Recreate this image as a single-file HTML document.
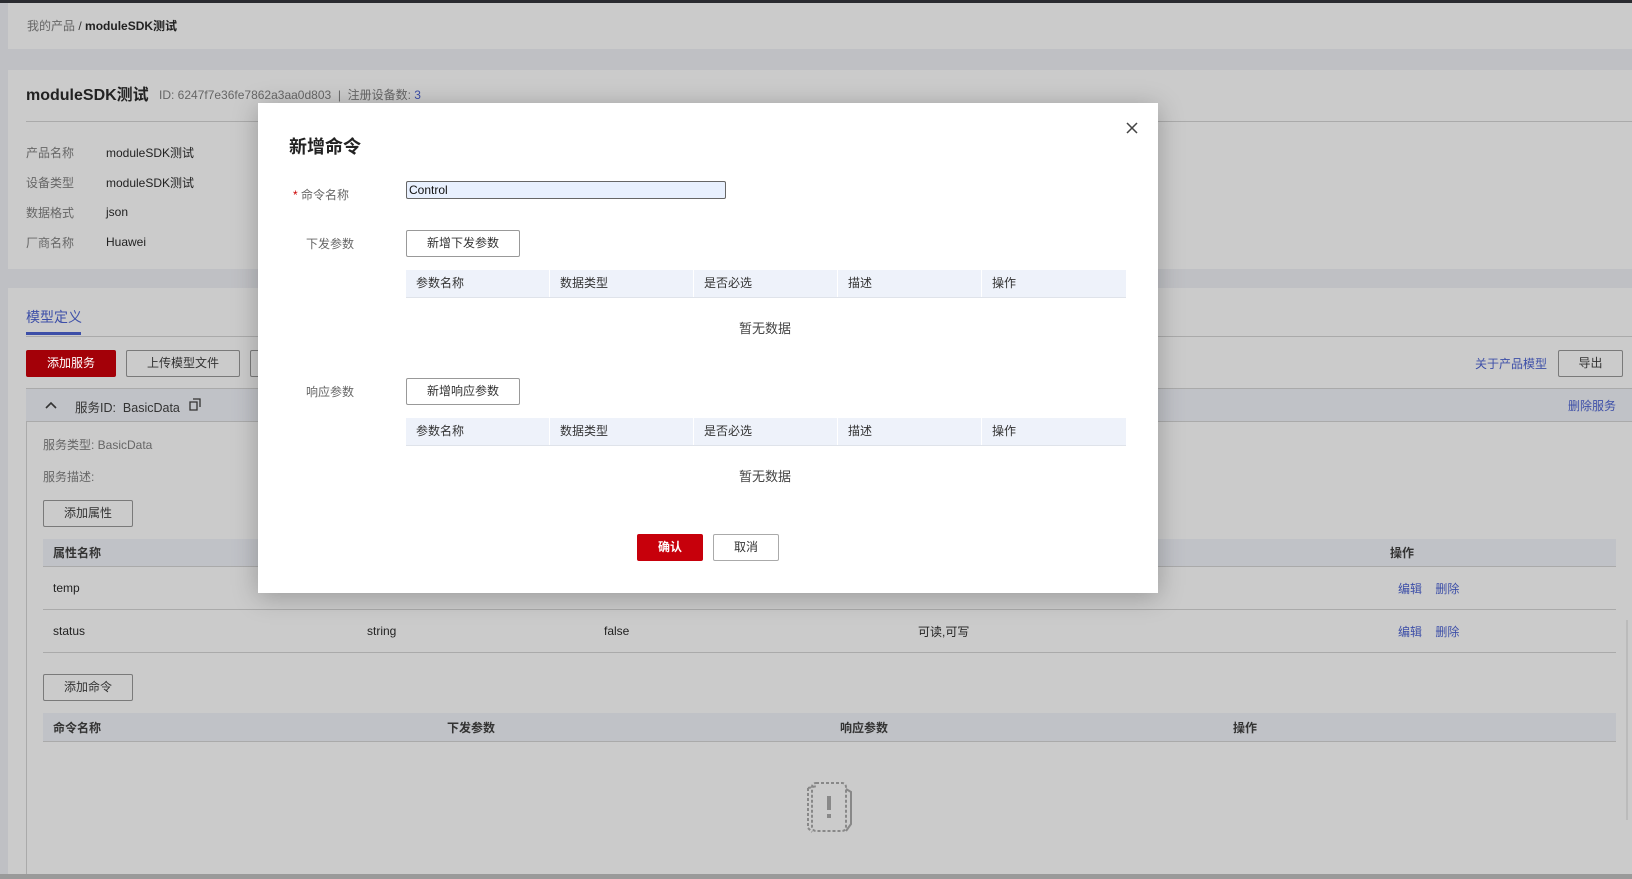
<!DOCTYPE html>
<html><head><meta charset="utf-8"><style>
*{margin:0;padding:0;box-sizing:border-box}
body{width:1632px;height:879px;overflow:hidden;background:#bfc0c4;font-family:"Liberation Sans","Noto Sans CJK SC",sans-serif;font-size:12px;color:#222;position:relative}
.a{position:absolute;white-space:nowrap}
.card{position:absolute;background:#cbcbcb}
.btn{position:absolute;border:1px solid #7a7a7a;border-radius:2px;text-align:center;color:#333;background:transparent}
.lbl{color:#666}
.blue{color:#3d4fa8}
.th{position:absolute;background:#c0c2c7;border-bottom:1px solid #aaa}
.mth{position:absolute;background:#eef2fa;border-bottom:1px solid #dfe3ea;height:28px}
.mth span{position:absolute;top:4px;color:#333}
.mth i{position:absolute;top:0;width:1px;height:27px;background:#fff}
</style></head><body>
<div class="a" style="left:0;top:0;width:1632px;height:3px;background:#2a2b30"></div>
<div class="card" style="left:8px;top:3px;width:1624px;height:46px"></div>
<div class="a lbl" style="left:27px;top:17px">我的产品 <span style="color:#333">/</span> <b style="color:#222">moduleSDK测试</b></div>
<div class="card" style="left:8px;top:70px;width:1624px;height:199px"></div>
<div class="a" style="left:26px;top:81px;font-size:16px;font-weight:bold">moduleSDK测试</div>
<div class="a lbl" style="left:159px;top:86px">ID: 6247f7e36fe7862a3aa0d803 &nbsp;| &nbsp;注册设备数: <span class="blue">3</span></div>
<div class="a" style="left:26px;top:121px;width:1606px;height:1px;background:#aaa"></div>
<div class="a lbl" style="left:26px;top:144px">产品名称</div><div class="a" style="left:106px;top:144px">moduleSDK测试</div>
<div class="a lbl" style="left:26px;top:174px">设备类型</div><div class="a" style="left:106px;top:174px">moduleSDK测试</div>
<div class="a lbl" style="left:26px;top:204px">数据格式</div><div class="a" style="left:106px;top:205px">json</div>
<div class="a lbl" style="left:26px;top:234px">厂商名称</div><div class="a" style="left:106px;top:235px">Huawei</div>
<div class="card" style="left:8px;top:288px;width:1624px;height:586px"></div>
<div class="a blue" style="left:26px;top:307px;font-size:14px">模型定义</div>
<div class="a" style="left:26px;top:332px;width:55px;height:3px;background:#3d4fa8"></div>
<div class="a" style="left:26px;top:336px;width:1606px;height:1px;background:#aaa"></div>
<div class="btn" style="left:26px;top:350px;width:90px;height:27px;line-height:25px;background:#a30008;border-color:#a30008;color:#fff">添加服务</div>
<div class="btn" style="left:126px;top:350px;width:114px;height:27px;line-height:25px">上传模型文件</div>
<div class="btn" style="left:250px;top:350px;width:30px;height:27px"></div>
<div class="a blue" style="left:1475px;top:355px">关于产品模型</div>
<div class="btn" style="left:1558px;top:350px;width:65px;height:27px;line-height:25px">导出</div>
<div class="a" style="left:26px;top:388px;width:1606px;height:34px;background:#c0c2c7;border-top:1px solid #aaa;border-bottom:1px solid #aaa"></div>
<div class="a" style="left:26px;top:422px;width:1px;height:452px;background:#aaa"></div>
<svg class="a" style="left:44px;top:400px" width="14" height="10" viewBox="0 0 14 10"><path d="M2 8l5-5 5 5" fill="none" stroke="#333" stroke-width="1.6"/></svg>
<div class="a" style="left:75px;top:397px;color:#333;font-size:12.5px">服务ID: &nbsp;BasicData</div>
<svg class="a" style="left:189px;top:398px" width="12" height="13" viewBox="0 0 12 13"><path d="M4 1h7v8M1 4h7v8H1z" fill="none" stroke="#333" stroke-width="1.3"/></svg>
<div class="a blue" style="left:1568px;top:397px">删除服务</div>
<div class="a lbl" style="left:43px;top:436px">服务类型: BasicData</div>
<div class="a lbl" style="left:43px;top:468px">服务描述:</div>
<div class="btn" style="left:43px;top:500px;width:90px;height:27px;line-height:25px">添加属性</div>
<div class="th" style="left:43px;top:539px;width:1573px;height:28px"></div>
<div class="a" style="left:53px;top:544px;font-weight:bold;color:#333">属性名称</div>
<div class="a" style="left:1390px;top:544px;font-weight:bold;color:#333">操作</div>
<div class="a" style="left:53px;top:581px">temp</div>
<div class="a" style="left:43px;top:609px;width:1573px;height:1px;background:#aaa"></div>
<div class="a" style="left:53px;top:624px">status</div><div class="a" style="left:367px;top:624px">string</div><div class="a" style="left:604px;top:624px">false</div><div class="a" style="left:918px;top:623px">可读,可写</div>
<div class="a blue" style="left:1398px;top:580px">编辑 &nbsp;&nbsp; 删除</div>
<div class="a blue" style="left:1398px;top:623px">编辑 &nbsp;&nbsp; 删除</div>
<div class="a" style="left:43px;top:652px;width:1573px;height:1px;background:#aaa"></div>
<div class="btn" style="left:43px;top:674px;width:90px;height:27px;line-height:25px">添加命令</div>
<div class="th" style="left:43px;top:713px;width:1573px;height:29px"></div>
<div class="a" style="left:53px;top:719px;font-weight:bold;color:#333">命令名称</div>
<div class="a" style="left:447px;top:719px;font-weight:bold;color:#333">下发参数</div>
<div class="a" style="left:840px;top:719px;font-weight:bold;color:#333">响应参数</div>
<div class="a" style="left:1233px;top:719px;font-weight:bold;color:#333">操作</div>
<svg class="a" style="left:800px;top:780px" width="60" height="56" viewBox="0 0 60 56"><path d="M8 8l9-2M8 8v40l4 4" fill="none" stroke="#888" stroke-width="2" stroke-dasharray="3 2"/><rect x="12" y="3" width="34" height="48" rx="4" fill="none" stroke="#888" stroke-width="2" stroke-dasharray="3 2"/><path d="M46 9l5 3v32l-5 7" fill="none" stroke="#888" stroke-width="2"/><rect x="27" y="16" width="4" height="14" fill="#888"/><rect x="27" y="34" width="4" height="4" fill="#888"/></svg>
<div class="a" style="left:0;top:874px;width:1632px;height:5px;background:#9a9a9a"></div>
<div class="a" style="left:1626px;top:620px;width:2px;height:200px;background:#bbb"></div>

<div class="a" style="left:258px;top:103px;width:900px;height:490px;background:#fff;box-shadow:0 4px 24px rgba(0,0,0,.25)"></div>
<div class="a" style="left:289px;top:133px;font-size:18px;font-weight:bold;color:#222">新增命令</div>
<svg class="a" style="left:1126px;top:122px" width="12" height="12" viewBox="0 0 12 12"><path d="M1 1l10 10M11 1L1 11" stroke="#444" stroke-width="1.5"/></svg>
<div class="a lbl" style="left:293px;top:186px"><span style="color:#c00">*</span> 命令名称</div>
<div class="a" style="left:406px;top:181px;width:320px;height:18px;background:#e8f0fe;border:1px solid #666;border-radius:2px;padding-left:2px;line-height:16px;color:#111">Control</div>
<div class="a lbl" style="left:306px;top:235px">下发参数</div>
<div class="btn" style="left:406px;top:230px;width:114px;height:27px;line-height:25px;border-color:#999">新增下发参数</div>
<div class="mth" style="left:406px;top:270px;width:720px"><span style="left:10px">参数名称</span><i style="left:143px"></i><span style="left:154px">数据类型</span><i style="left:287px"></i><span style="left:298px">是否必选</span><i style="left:431px"></i><span style="left:442px">描述</span><i style="left:575px"></i><span style="left:586px">操作</span></div>
<div class="a" style="left:739px;top:318px;color:#444;font-size:13px">暂无数据</div>
<div class="a lbl" style="left:306px;top:383px">响应参数</div>
<div class="btn" style="left:406px;top:378px;width:114px;height:27px;line-height:25px;border-color:#999">新增响应参数</div>
<div class="mth" style="left:406px;top:418px;width:720px"><span style="left:10px">参数名称</span><i style="left:143px"></i><span style="left:154px">数据类型</span><i style="left:287px"></i><span style="left:298px">是否必选</span><i style="left:431px"></i><span style="left:442px">描述</span><i style="left:575px"></i><span style="left:586px">操作</span></div>
<div class="a" style="left:739px;top:466px;color:#444;font-size:13px">暂无数据</div>
<div class="btn" style="left:637px;top:534px;width:66px;height:27px;line-height:25px;background:#c7000b;border-color:#c7000b;color:#fff;font-weight:bold">确认</div>
<div class="btn" style="left:713px;top:534px;width:66px;height:27px;line-height:25px;border-color:#aaa">取消</div>
</body></html>
